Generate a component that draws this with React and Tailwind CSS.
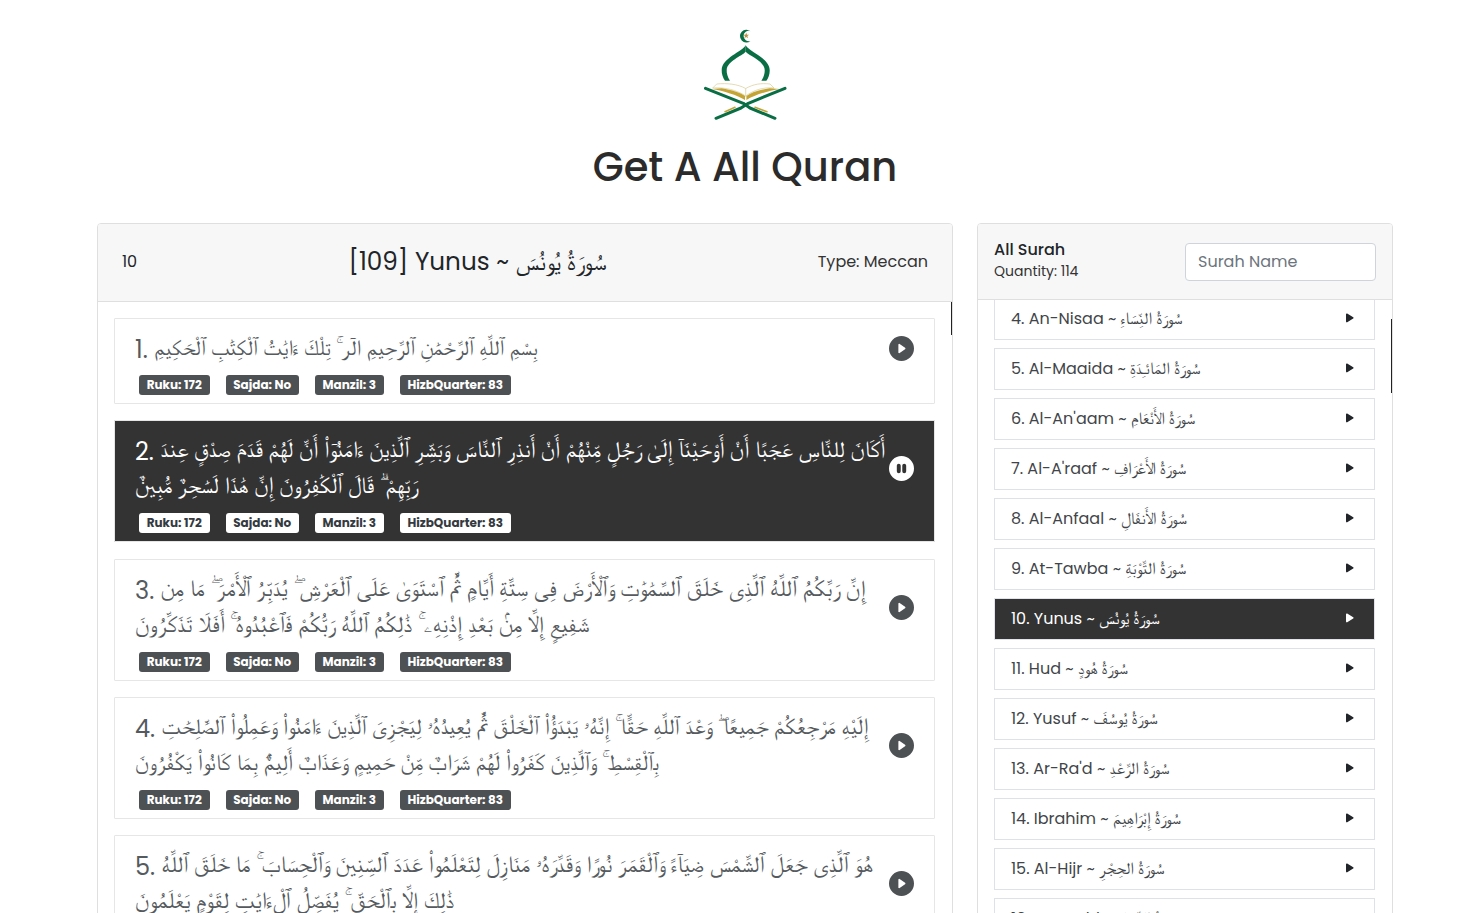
import React from "react";
import { BsPlayCircleFill, BsPauseCircleFill } from "react-icons/bs";

const verses = [
  { n: 1, size: "text-[21.7px]", t: "بِسْمِ ٱللَّهِ ٱلرَّحْمَٰنِ ٱلرَّحِيمِ الٓر ۚ تِلْكَ ءَايَٰتُ ٱلْكِتَٰبِ ٱلْحَكِيمِ" },
  { n: 2, size: "text-[22.9px]", active: true, t: "أَكَانَ لِلنَّاسِ عَجَبًا أَنْ أَوْحَيْنَآ إِلَىٰ رَجُلٍ مِّنْهُمْ أَنْ أَنذِرِ ٱلنَّاسَ وَبَشِّرِ ٱلَّذِينَ ءَامَنُوٓا۟ أَنَّ لَهُمْ قَدَمَ صِدْقٍ عِندَ رَبِّهِمْ ۗ قَالَ ٱلْكَٰفِرُونَ إِنَّ هَٰذَا لَسَٰحِرٌ مُّبِينٌ" },
  { n: 3, size: "text-[23.3px]", t: "إِنَّ رَبَّكُمُ ٱللَّهُ ٱلَّذِى خَلَقَ ٱلسَّمَٰوَٰتِ وَٱلْأَرْضَ فِى سِتَّةِ أَيَّامٍ ثُمَّ ٱسْتَوَىٰ عَلَى ٱلْعَرْشِ ۖ يُدَبِّرُ ٱلْأَمْرَ ۖ مَا مِن شَفِيعٍ إِلَّا مِنۢ بَعْدِ إِذْنِهِۦ ۚ ذَٰلِكُمُ ٱللَّهُ رَبُّكُمْ فَٱعْبُدُوهُ ۚ أَفَلَا تَذَكَّرُونَ" },
  { n: 4, size: "text-[22.5px]", t: "إِلَيْهِ مَرْجِعُكُمْ جَمِيعًا ۖ وَعْدَ ٱللَّهِ حَقًّا ۚ إِنَّهُۥ يَبْدَؤُا۟ ٱلْخَلْقَ ثُمَّ يُعِيدُهُۥ لِيَجْزِىَ ٱلَّذِينَ ءَامَنُوا۟ وَعَمِلُوا۟ ٱلصَّٰلِحَٰتِ بِٱلْقِسْطِ ۚ وَٱلَّذِينَ كَفَرُوا۟ لَهُمْ شَرَابٌ مِّنْ حَمِيمٍ وَعَذَابٌ أَلِيمٌۢ بِمَا كَانُوا۟ يَكْفُرُونَ" },
  { n: 5, size: "text-[23.1px]", t: "هُوَ ٱلَّذِى جَعَلَ ٱلشَّمْسَ ضِيَآءً وَٱلْقَمَرَ نُورًا وَقَدَّرَهُۥ مَنَازِلَ لِتَعْلَمُوا۟ عَدَدَ ٱلسِّنِينَ وَٱلْحِسَابَ ۚ مَا خَلَقَ ٱللَّهُ ذَٰلِكَ إِلَّا بِٱلْحَقِّ ۚ يُفَصِّلُ ٱلْءَايَٰتِ لِقَوْمٍ يَعْلَمُونَ" },
];

const surahs = [
  ["4. An-Nisaa", "سُورَةُ النِّسَاءِ"],
  ["5. Al-Maaida", "سُورَةُ المَائـِدَةِ"],
  ["6. Al-An'aam", "سُورَةُ الأَنْعَامِ"],
  ["7. Al-A'raaf", "سُورَةُ الأَعْرَافِ"],
  ["8. Al-Anfaal", "سُورَةُ الأَنفَالِ"],
  ["9. At-Tawba", "سُورَةُ التَّوْبَةِ"],
  ["10. Yunus", "سُورَةُ يُونُسَ", true],
  ["11. Hud", "سُورَةُ هُودٍ"],
  ["12. Yusuf", "سُورَةُ يُوسُفَ"],
  ["13. Ar-Ra'd", "سُورَةُ الرَّعْدِ"],
  ["14. Ibrahim", "سُورَةُ إِبْرَاهِيمَ"],
  ["15. Al-Hijr", "سُورَةُ الحِجْرِ"],
  ["16. An-Nahl", "سُورَةُ النَّحْلِ"],
];

function Logo() {
  const green = "#0a6e45";
  const gold = "#c3a435";
  return (
    <svg viewBox="700 25 90 100" className="w-[90px] h-[100px] block">
      <path d="M750.500 31.200a6.400 6.400 0 1 0 0 9.800a5.200 5.200 0 1 1 0-9.800z" fill={green} />
      <path d="M746.200 32.800l.8 2h2.100l-1.700 1.300.6 2.100-1.800-1.200-1.800 1.200.6-2.100-1.700-1.300h2.100z" fill="#b9924a" />
      <path d="M745.700 45.300C742 52 722 58 721.700 70C721.500 74 723 78 725 80.700L730 80.700C727.500 77 726.500 73 726.700 70C727 61 742 56 745.700 51.700Z" fill={green} />
      <path d="M745.700 45.300C749.400 52 769.400 58 769.700 70C769.900 74 768.400 78 766.400 80.700L761.400 80.700C763.900 77 764.900 73 764.700 70C764.400 61 749.400 56 745.700 51.700Z" fill={green} />
      <path d="M716.700 84c10-1 21 0 29 4.500c8-4.500 15-5.500 24.300-4.500l4 4c-11-1-20 2-28.300 8c-9-6-21-9-33-8z" fill="#fff" stroke="#d8cb92" strokeWidth="0.700" />
      <path d="M711.700 89L721.700 88.300C732 90 740 92.500 745 96L745 100C737 95 724 91 711.700 89Z" fill={gold} />
      <path d="M779.700 89L769.700 88.300C759.400 90 751.400 92.500 746.400 96L746.400 100C754.400 95 767.400 91 779.700 89Z" fill={gold} />
      <path d="M745.700 88.500v8" stroke="#d8cb92" strokeWidth="0.700" />
      <path d="M705.500 88.300L743.300 103.300L750 108L775 118.300" fill="none" stroke={green} strokeWidth="3" strokeLinecap="round" strokeLinejoin="round" />
      <path d="M785 88.300L748.300 103.300L741 108L716 118.300" fill="none" stroke={green} strokeWidth="3" strokeLinecap="round" strokeLinejoin="round" />
      <path d="M725 111.700L735 107.300M767 111.700L755 107.300" stroke={gold} strokeWidth="1.500" strokeLinecap="round" />
    </svg>
  );
}

function Ar({ className, children }) {
  return <span className={`font-['FreeSerif','Noto_Naskh_Arabic',serif] leading-none ${className}`}>{children}</span>;
}

function Badge({ active, children }) {
  return (
    <span className={`px-[7.7px] h-5 rounded-[3px] text-[12px] font-bold leading-5 ${active ? "bg-white text-[#343a40]" : "bg-[#4d5154] text-white"}`}>
      {children}
    </span>
  );
}

function Verse({ v }) {
  const { n, t, active, size } = v;
  return (
    <div className={`border rounded-[1px] pl-5 pr-5 pt-[11px] pb-[8px] ${active ? "mb-px bg-[#333333] border-[#e5e5e5] text-white" : "bg-white border-[#e6e6e6] text-[#555a5e]"}`}>
      <div className="flex items-center">
        <p className="flex-1 min-w-0 text-[24px] leading-9">
          <span className="leading-none align-[-2px]">{n}.</span> <Ar className={`${size} align-[1px]`}>{t}</Ar>
        </p>
        <span className={`shrink-0 ml-[2px] ${active ? "text-white" : "text-[#4d5154]"}`}>
          {active ? <BsPauseCircleFill size={25} /> : <BsPlayCircleFill size={25} />}
        </span>
      </div>
      <div className="flex gap-4 pl-1 mt-[9px]">
        <Badge active={active}>Ruku: 172</Badge>
        <Badge active={active}>Sajda: No</Badge>
        <Badge active={active}>Manzil: 3</Badge>
        <Badge active={active}>HizbQuarter: 83</Badge>
      </div>
    </div>
  );
}

function Surah({ name, ar, active }) {
  return (
    <div className={`h-[42px] shrink-0 flex items-center justify-between border pl-4 pr-5 text-[16px] ${active ? "bg-[#333333] border-[#e3e3ea] text-white" : "bg-white border-[#dee2e6] text-[#414549]"}`}>
      <span>{name} ~ <Ar className="text-[17px]">{ar}</Ar></span>
      <svg viewBox="0 0 9 10" className="w-[9px] h-[10px] mb-[2px]">
        <path d="M1 1.200c0-.7.6-1 1.200-.7l6 3.700c.5.300.5 1.100 0 1.400l-6 3.700c-.6.300-1.200 0-1.200-.7z" fill={active ? "#fff" : "#212529"} />
      </svg>
    </div>
  );
}

export default function App() {
  return (
    <div className="h-screen overflow-hidden bg-white text-[#212529] font-['Poppins',sans-serif]">
      <div className="w-[1296px] ml-[97px]">
        <div className="pt-[25px] flex flex-col items-center">
          <Logo />
          <h1 className="text-[40px] leading-[48px] mt-[18px] font-medium text-[#2b2b2b]">Get A All Quran</h1>
        </div>
        <div className="mt-[32px] grid grid-cols-[856px_416px] gap-6">
          <div className="relative border border-[#dfdfdf] rounded-[4px] h-[800px] overflow-hidden">
            <div className="h-[78px] pb-[2px] bg-[#f7f7f7] border-b border-[#dfdfdf] flex items-center justify-between px-6">
              <span className="text-[16px]">10</span>
              <span className="text-[24.7px]">[109] Yunus ~ <Ar className="text-[25.5px]">سُورَةُ يُونُسَ</Ar></span>
              <span className="text-[16px] text-[#333]">Type: Meccan</span>
            </div>
            <div className="pl-4 pr-[17px] pt-4 flex flex-col gap-4">
              {verses.map((v) => (
                <Verse key={v.n} v={v} />
              ))}
            </div>
            <div className="absolute right-0 top-[78px] w-px h-[33px] bg-[#222]" />
          </div>
          <div className="relative border border-[#dfdfdf] rounded-[4px] h-[800px] overflow-hidden">
            <div className="h-[76px] bg-[#f7f7f7] border-b border-[#dfdfdf] flex items-center justify-between pl-4 pr-4">
              <div className="pb-[5px]">
                <div className="text-[16px] leading-6 font-medium">All Surah</div>
                <div className="text-[14px] leading-[18px] text-[#333]">Quantity: 114</div>
              </div>
              <input
                placeholder="Surah Name"
                className="w-[191px] h-[38px] bg-white border border-[#ced4da] rounded-[4px] px-3 text-[16px] placeholder:text-[#6c757d] outline-none"
              />
            </div>
            <div className="overflow-hidden h-[722px]">
              <div className="pl-4 pr-[17px] flex flex-col gap-2 -mt-[2px]">
                {surahs.map(([n, a, act]) => (
                  <Surah key={n} name={n} ar={a} active={act} />
                ))}
              </div>
            </div>
            <div className="absolute right-0 top-[95px] w-px h-[74px] bg-[#222]" />
          </div>
        </div>
      </div>
    </div>
  );
}
